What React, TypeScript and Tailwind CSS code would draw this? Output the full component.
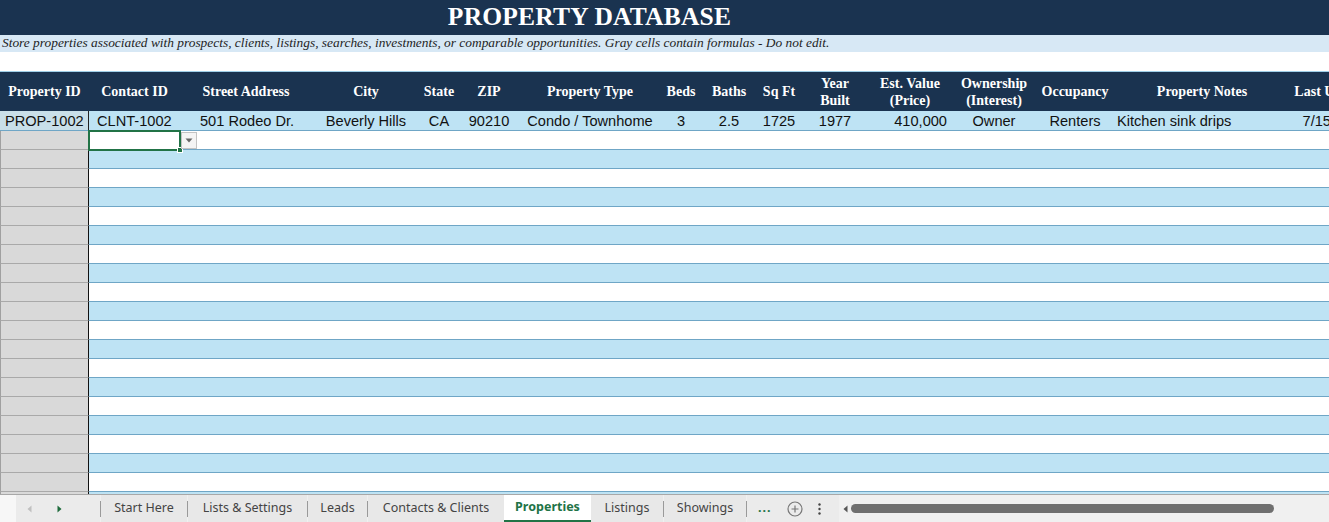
import React from "react";

const cols = [89, 91, 132, 108, 38, 62, 140, 42, 54, 46, 66, 84, 84, 78, 176, 90];

const headers: string[][] = [
  ["Property ID"],
  ["Contact ID"],
  ["Street Address"],
  ["City"],
  ["State"],
  ["ZIP"],
  ["Property Type"],
  ["Beds"],
  ["Baths"],
  ["Sq Ft"],
  ["Year", "Built"],
  ["Est. Value", "(Price)"],
  ["Ownership", "(Interest)"],
  ["Occupancy"],
  ["Property Notes"],
  ["Last Updated"],
];

type Cell = { t: string; a: "l" | "c" | "r" };
const data: Cell[] = [
  { t: "PROP-1002", a: "l" },
  { t: "CLNT-1002", a: "l" },
  { t: "501 Rodeo Dr.", a: "l" },
  { t: "Beverly Hills", a: "c" },
  { t: "CA", a: "c" },
  { t: "90210", a: "c" },
  { t: "Condo / Townhome", a: "c" },
  { t: "3", a: "c" },
  { t: "2.5", a: "c" },
  { t: "1725", a: "c" },
  { t: "1977", a: "c" },
  { t: "410,000", a: "r" },
  { t: "Owner", a: "c" },
  { t: "Renters", a: "c" },
  { t: "Kitchen sink drips", a: "l" },
  { t: "7/15/2024", a: "c" },
];

const padL = [5, 8, 20, 0, 0, 0, 0, 0, 0, 0, 0, 0, 0, 0, 3, 0];

export default function App() {
  const emptyRows = Array.from({ length: 19 }, (_, i) => i);
  return (
    <div
      className="relative flex h-[522px] w-[1329px] flex-col overflow-hidden bg-white"
      style={{ fontFamily: "'Liberation Sans', Arial, sans-serif" }}
    >
      {/* Title */}
      <div className="flex h-[35px] shrink-0 items-center justify-center bg-[#1a3350]">
        <span
          className="ml-[-150px] text-[25.5px] font-bold tracking-[0.2px] text-white"
          style={{ fontFamily: "'Liberation Serif', 'Times New Roman', serif" }}
        >
          PROPERTY DATABASE
        </span>
      </div>
      {/* Subtitle */}
      <div className="flex h-[17px] shrink-0 items-center bg-[#d7e8f5] pl-[2px]">
        <span
          className="whitespace-nowrap text-[13.4px] italic text-[#1e1e1e]"
          style={{ fontFamily: "'Liberation Serif', 'Times New Roman', serif" }}
        >
          Store properties associated with prospects, clients, listings, searches, investments, or comparable opportunities. Gray cells contain formulas - Do not edit.
        </span>
      </div>
      {/* Blank row */}
      <div className="h-[19px] shrink-0 bg-white" />

      {/* Table */}
      <div className="relative min-h-0 flex-1 overflow-hidden">
        {/* Header */}
        <div className="flex h-[40px] border-t border-[#9fcfe8] bg-[#1a3350]">
          {headers.map((h, i) => (
            <div
              key={i}
              className="flex shrink-0 flex-col items-center justify-center whitespace-nowrap text-[14px] font-bold leading-[17px] text-white"
              style={{ width: cols[i], fontFamily: "'Liberation Serif', 'Times New Roman', serif" }}
            >
              {h.map((l, j) => (
                <span key={j}>{l}</span>
              ))}
            </div>
          ))}
        </div>
        {/* Data row */}
        <div className="flex h-[20px] border-b border-[#6fa6c6] bg-[#bee3f4]">
          {data.map((c, i) => (
            <div
              key={i}
              className={
                "flex shrink-0 items-center overflow-hidden whitespace-nowrap pt-[1px] text-[14.6px] leading-[18px] text-[#111] " +
                (c.a === "l" ? "justify-start" : c.a === "c" ? "justify-center" : "justify-end pr-[5px]") +
                (i === 0 ? " border-r border-[#222] bg-[#c9dfe9]" : "")
              }
              style={{ width: cols[i], paddingLeft: padL[i] }}
            >
              {c.t}
            </div>
          ))}
        </div>
        {/* Empty rows */}
        {emptyRows.map((r) => (
          <div
            key={r}
            className={
              "flex h-[19px] border-b " +
              (r % 2 === 0 ? "border-[#6fa6c6] bg-white" : "border-[#6fa6c6] bg-[#bee3f4]")
            }
          >
            <div className="-mb-px w-[89px] shrink-0 border-b border-l border-r border-b-[#a9a9a9] border-l-[#a0a0a0] border-r-[#111] bg-[#d9d9d9]" />
            <div className="flex-1" />
          </div>
        ))}
        <div className="flex h-[6px] bg-[#bee3f4]">
          <div className="w-[89px] shrink-0 border-l border-r border-l-[#a0a0a0] border-r-[#111] bg-[#d9d9d9]" />
        </div>

        {/* Selected cell */}
        <div className="absolute left-[88px] top-[59px] h-[21px] w-[93px] border-2 border-[#217346]" />
        <div className="absolute left-[177px] top-[76px] h-[6px] w-[6px] border border-white bg-[#217346]" />
        {/* Dropdown */}
        <div className="absolute left-[181px] top-[61px] flex h-[17px] w-[16px] items-center justify-center border border-[#c3c3c3] bg-[#f4f4f4]">
          <svg width="8" height="5" viewBox="0 0 8 5">
            <path d="M0.5 0.5 L7.5 0.5 L4 4.5 Z" fill="#666" />
          </svg>
        </div>
      </div>

      {/* Tab bar */}
      <div
        className="flex h-[28px] shrink-0 items-center border-t border-[#a8a8a8] bg-[#f0f0f0] text-[12.5px] text-[#444]"
        style={{ fontFamily: "'Noto Sans', 'Liberation Sans', sans-serif" }}
      >
        <div className="flex h-full w-[16px] shrink-0 bg-[#f7f7f7]" />
        <div className="flex h-full w-[84px] shrink-0 items-center bg-[#ebebeb]">
          <svg className="ml-[11px]" width="5" height="8" viewBox="0 0 5 8">
            <path d="M4.5 0.5 L0.5 4 L4.5 7.5 Z" fill="#c0c0c0" />
          </svg>
          <svg className="ml-[25px]" width="5" height="8" viewBox="0 0 5 8">
            <path d="M0.5 0.5 L4.5 4 L0.5 7.5 Z" fill="#1e6b3c" />
          </svg>
        </div>
        {[
          { n: "Start Here", w: 87 },
          { n: "Lists & Settings", w: 120 },
          { n: "Leads", w: 60 },
          { n: "Contacts & Clients", w: 137 },
        ].map((t) => (
          <div key={t.n} className="flex h-full shrink-0 items-center" style={{ width: t.w }}>
            <div className="h-[16px] w-px bg-[#9a9a9a]" />
            <div className="flex h-full flex-1 items-center justify-center bg-[#e8e8e8]">{t.n}</div>
          </div>
        ))}
        <div className="flex h-full w-[87px] shrink-0 flex-col bg-white">
          <div className="flex flex-1 items-center justify-center font-bold text-[#217346]">Properties</div>
          <div className="h-[2px] bg-[#217346]" />
        </div>
        {[
          { n: "Listings", w: 72 },
          { n: "Showings", w: 83 },
        ].map((t, i) => (
          <div key={t.n} className="flex h-full shrink-0 items-center" style={{ width: t.w }}>
            {i > 0 && <div className="h-[16px] w-px bg-[#9a9a9a]" />}
            <div className="flex h-full flex-1 items-center justify-center bg-[#e8e8e8]">{t.n}</div>
          </div>
        ))}
        <div className="h-[16px] w-px bg-[#9a9a9a]" />
        <div className="flex h-full w-[92px] shrink-0 items-center bg-[#ebebeb]">
          <span className="ml-[11px] font-bold tracking-[1px] text-[#217346]">...</span>
          <svg className="ml-[15px]" width="16" height="16" viewBox="0 0 16 16">
            <circle cx="8" cy="8" r="7" fill="none" stroke="#777" strokeWidth="1.2" />
            <path d="M8 4.5 V11.5 M4.5 8 H11.5" stroke="#777" strokeWidth="1.2" />
          </svg>
          <svg className="ml-[15px]" width="3" height="12" viewBox="0 0 3 12">
            <circle cx="1.5" cy="1.5" r="1.2" fill="#444" />
            <circle cx="1.5" cy="6" r="1.2" fill="#444" />
            <circle cx="1.5" cy="10.5" r="1.2" fill="#444" />
          </svg>
        </div>
        <div className="flex h-full flex-1 items-center bg-[#f0f0f0]">
          <svg className="ml-[4px]" width="5" height="8" viewBox="0 0 5 8">
            <path d="M4.5 0.5 L0.5 4 L4.5 7.5 Z" fill="#555" />
          </svg>
          <div className="ml-[3px] h-[9px] w-[423px] rounded-full bg-[#6f6f6f]" />
        </div>
      </div>
    </div>
  );
}
